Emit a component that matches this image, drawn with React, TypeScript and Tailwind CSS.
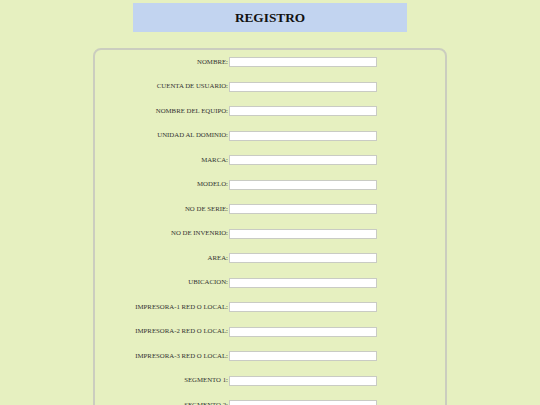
import React from "react";

const labels = [
  "NOMBRE:",
  "CUENTA DE USUARIO:",
  "NOMBRE DEL EQUIPO:",
  "UNIDAD AL DOMINIO:",
  "MARCA:",
  "MODELO:",
  "NO DE SERIE:",
  "NO DE INVENRIO:",
  "AREA:",
  "UBICACION:",
  "IMPRESORA-1 RED O LOCAL:",
  "IMPRESORA-2 RED O LOCAL:",
  "IMPRESORA-3 RED O LOCAL:",
  "SEGMENTO 1:",
  "SEGMENTO 2:",
  "SEGMENTO 3:",
  "OBSERVACIONES:",
];

export default function App() {
  return (
    <div
      className="min-h-screen w-full bg-[#e6f0c0] pt-[3px] pb-8"
      style={{ fontFamily: '"Liberation Serif", "Times New Roman", serif' }}
    >
      <div className="mx-auto flex h-[29px] w-[274px] items-center justify-center bg-[#c2d4f0]">
        <h1 className="text-[13.3px] font-bold leading-none text-[#111]">REGISTRO</h1>
      </div>
      <div className="mx-auto mt-[16px] w-[354px] rounded-[8px] border-2 border-[#cbcdbf] pb-4">
        <div className="grid grid-cols-[133px_148px] gap-x-px">
          {labels.map((l) => (
            <React.Fragment key={l}>
              <div className="flex h-[24.5px] items-center justify-end text-[6.8px] leading-none text-[#333]">
                {l}
              </div>
              <div className="flex h-[24.5px] items-center">
                <input
                  type="text"
                  className="h-[10px] w-[148px] border border-[#c9cbc4] bg-white outline-none"
                />
              </div>
            </React.Fragment>
          ))}
        </div>
      </div>
    </div>
  );
}
